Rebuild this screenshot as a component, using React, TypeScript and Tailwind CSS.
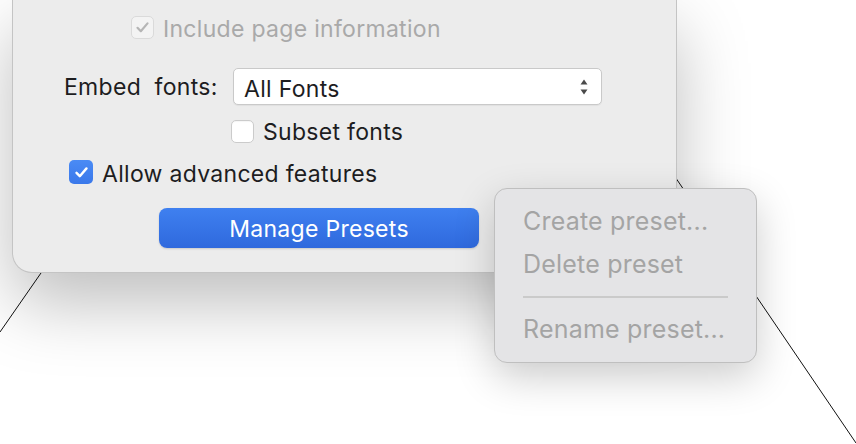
function Checkbox({ state }: { state: 'off' | 'on' | 'disabled' }) {
  if (state === 'on') {
    return (
      <span className="flex h-[24px] w-[24px] items-center justify-center rounded-[5px] bg-gradient-to-b from-[#4a8bf5] to-[#3a78ea]">
        <svg width="15" height="15" viewBox="0 0 15 15">
          <path d="M2.5 7.8l3.3 3.4 6.7-7.8" fill="none" stroke="#fff" strokeWidth="2.4" strokeLinecap="round" strokeLinejoin="round" />
        </svg>
      </span>
    );
  }
  if (state === 'disabled') {
    return (
      <span className="flex h-[23px] w-[23px] items-center justify-center rounded-[5px] border border-[#dadada] bg-[#f3f3f3]">
        <svg width="15" height="15" viewBox="0 0 15 15">
          <path d="M2.5 7.8l3.3 3.4 6.7-7.8" fill="none" stroke="#b5b5b5" strokeWidth="2.2" strokeLinecap="round" strokeLinejoin="round" />
        </svg>
      </span>
    );
  }
  return <span className="block h-[23px] w-[23px] rounded-[5px] border border-[#cbcbcb] bg-white shadow-[inset_0_1px_1px_rgba(0,0,0,0.04)]" />;
}

function SelectArrows() {
  return (
    <svg width="10" height="20" viewBox="0 0 10 20">
      <path d="M5 2.5L8.5 7.5H1.5Z" fill="#4a4a4a" />
      <path d="M5 17.5L8.5 12.5H1.5Z" fill="#4a4a4a" />
    </svg>
  );
}

export default function App() {
  const items = ['Create preset...', 'Delete preset'];

  return (
    <div
      className="relative h-[444px] w-[856px] overflow-hidden bg-white text-[23px] tracking-[0.3px] text-[#1d1d1f]"
      style={{ fontFamily: 'Inter, "Noto Sans", sans-serif' }}
    >
      {/* drafting lines behind the dialog */}
      <svg className="absolute inset-0" width="856" height="444">
        <line x1="82" y1="214" x2="0" y2="332" stroke="#111" strokeWidth="1" />
        <line x1="650" y1="140" x2="856" y2="443" stroke="#111" strokeWidth="1" />
      </svg>

      {/* Dialog sheet */}
      <div className="absolute left-[12px] top-0 h-[273px] w-[665px] rounded-b-[20px] border border-t-0 border-[#c4c4c4] bg-[#ececec] shadow-[0_30px_70px_rgba(0,0,0,0.26)]">
        <div className="flex flex-col">
          <div className="mt-[16px] ml-[118px] flex items-center gap-[9px] text-[#a9a9a9]">
            <Checkbox state="disabled" />
            <span className="relative top-[2px] leading-none">Include page information</span>
          </div>

          <div className="mt-[29px] flex items-center">
            <span className="relative top-[1px] ml-[51px] w-[169px] whitespace-pre leading-none">Embed  fonts:</span>
            <div className="flex h-[37px] w-[369px] items-center justify-between rounded-[5px] border border-[#c9c9c9] bg-white pl-[10px] pr-[12px] shadow-[0_1px_1px_rgba(0,0,0,0.05)]">
              <span className="relative top-[3px] leading-none">All Fonts</span>
              <SelectArrows />
            </div>
          </div>

          <div className="mt-[15px] ml-[218px] flex items-center gap-[9px]">
            <Checkbox state="off" />
            <span className="relative top-[1px] leading-none">Subset fonts</span>
          </div>

          <div className="mt-[17px] ml-[56px] flex items-center gap-[9px]">
            <Checkbox state="on" />
            <span className="relative top-[2px] leading-none">Allow advanced features</span>
          </div>

          <button className="mt-[24px] ml-[146px] flex h-[40px] w-[320px] items-center justify-center rounded-[8px] bg-gradient-to-b from-[#3f80f0] to-[#2f69dd] pt-[2px] tracking-[0.3px] text-white shadow-[0_1px_2px_rgba(0,0,0,0.15)]">
            Manage Presets
          </button>
        </div>
      </div>

      {/* Presets menu */}
      <div className="absolute left-[494px] top-[188px] flex h-[175px] w-[263px] flex-col rounded-[13px] border border-[#bfbfbf] bg-[#e4e4e6] py-[11px] text-[25px] tracking-[0.2px] text-[#a4a4a4] shadow-[0_14px_40px_rgba(0,0,0,0.2)]">
        {items.map((label) => (
          <div key={label} className="flex h-[44px] items-center whitespace-nowrap pl-[28px] leading-none">
            {label}
          </div>
        ))}
        <div className="flex h-[22px] items-center px-[28px]">
          <div className="h-[2px] w-full bg-[#cacaca]" />
        </div>
        <div className="flex h-[44px] items-center whitespace-nowrap pl-[28px] leading-none">Rename preset...</div>
      </div>
    </div>
  );
}
